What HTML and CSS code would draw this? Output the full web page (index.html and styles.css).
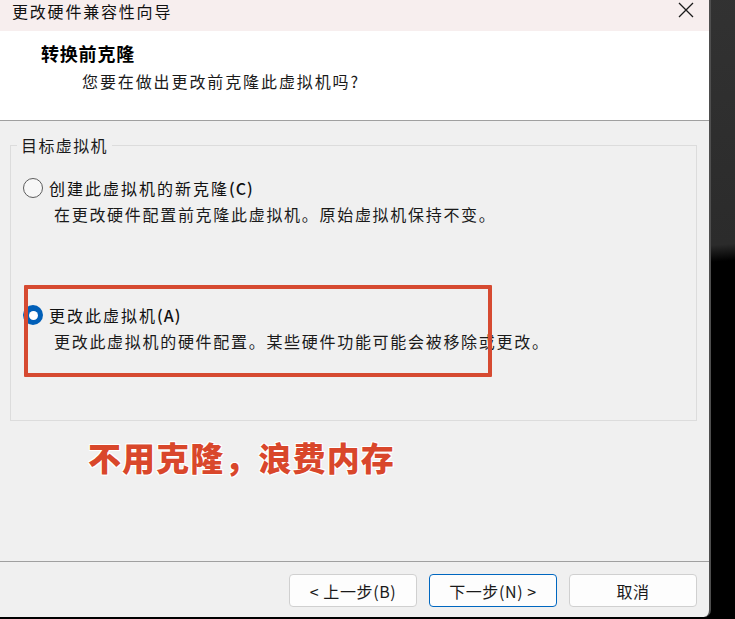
FILE: index.html
```html
<!DOCTYPE html>
<html lang="zh-CN">
<head>
<meta charset="utf-8">
<title>更改硬件兼容性向导</title>
<link rel="stylesheet" href="styles.css">
</head>
<body>
<div class="window">
  <div class="titlebar">
    <span class="title">更改硬件兼容性向导</span>
    <svg class="close" width="16" height="16" viewBox="0 0 16 16"><path d="M1 1 L15 15 M15 1 L1 15" stroke="#1b1b1b" stroke-width="1.3" fill="none"/></svg>
  </div>
  <div class="header">
    <div class="heading">转换前克隆</div>
    <div class="subtitle">您要在做出更改前克隆此虚拟机吗?</div>
  </div>
  <div class="body">
    <fieldset class="group">
      <legend>目标虚拟机</legend>
      <div class="option first">
        <div class="option-row"><span class="radio"></span><span class="label">创建此虚拟机的新克隆<span class="label-key">(C)</span></span></div>
        <div class="desc">在更改硬件配置前克隆此虚拟机。原始虚拟机保持不变。</div>
      </div>
      <div class="option second">
        <div class="option-row"><span class="radio checked"></span><span class="label">更改此虚拟机<span class="label-key">(A)</span></span></div>
        <div class="desc">更改此虚拟机的硬件配置。某些硬件功能可能会被移除或更改。</div>
      </div>
    </fieldset>
  </div>
  <div class="footer">
    <button class="btn">&lt; 上一步(B)</button>
    <button class="btn primary">下一步(N) &gt;</button>
    <button class="btn">取消</button>
  </div>
  <div class="mark-box"></div>
  <div class="mark-text">不用克隆，浪费内存</div>
</div>
</body>
</html>
```
FILE: styles.css
```css
* { box-sizing: border-box; }
html, body { margin: 0; height: 100%; }
body {
  background: linear-gradient(176deg, #333333 0, #2b2b2b 44%, #000000 46.5%, #000000 100%);
  font-family: "Noto Sans CJK SC", "Noto Sans", sans-serif;
  color: #1a1a1a;
  overflow: hidden;
}
.window {
  position: relative;
  width: 711px;
  height: 617px;
  background: #f0f0f0;
  border-right: 2px solid #4e4e4e;
  border-bottom-right-radius: 7px;
  display: flex;
  flex-direction: column;
  overflow: hidden;
}
.titlebar {
  height: 31px;
  flex: none;
  background: #f7eeee;
  display: flex;
  justify-content: space-between;
  align-items: flex-start;
  padding: 0 15px 0 12px;
}
.title {
  font-size: 16px;
  line-height: 22px;
  letter-spacing: 1.8px;
  color: #111;
}
.close { margin-top: 2px; }
.header {
  height: 90px;
  flex: none;
  background: #ffffff;
  border-bottom: 1px solid #a0a0a0;
  padding: 10px 0 0 41px;
}
.heading {
  font-size: 18px;
  line-height: 24px;
  font-weight: 700;
  letter-spacing: 0.8px;
  color: #000;
}
.subtitle {
  margin: 4px 0 0 41px;
  font-size: 16px;
  line-height: 24px;
  letter-spacing: 1.9px;
  color: #1a1a1a;
}
.body {
  flex: 1;
  padding: 14px 12px 0 10px;
}
.group {
  margin: 0;
  height: 286px;
  border: 1px solid #dcdcdc;
  padding: 0 0 0 12px;
}
.group legend {
  margin-left: -6px;
  padding: 0 4px;
  font-size: 16px;
  line-height: 20px;
  letter-spacing: 1.4px;
  color: #1a1a1a;
}
.option.first { margin-top: 22px; }
.option.second { margin-top: 79px; }
.option-row {
  display: flex;
  align-items: center;
  gap: 6px;
  height: 22px;
}
.radio {
  width: 20px;
  height: 20px;
  border-radius: 50%;
  border: 1px solid #5c5c5c;
  background: #f7f7f7;
  flex: none;
  display: flex;
  align-items: center;
  justify-content: center;
}
.radio.checked {
  border: none;
  background: #005fb8;
}
.radio.checked::after {
  content: "";
  width: 9px;
  height: 9px;
  border-radius: 50%;
  background: #ffffff;
}
.label {
  font-size: 16px;
  line-height: 22px;
  letter-spacing: 2px;
  color: #111;
}
.label-key { font-weight: 500; letter-spacing: 1px; }
.desc {
  margin: 4px 0 0 31px;
  font-size: 16px;
  line-height: 22px;
  letter-spacing: 1.7px;
  color: #1a1a1a;
}
.footer {
  flex: none;
  height: 56px;
  border-top: 1px solid #a0a0a0;
  display: flex;
  justify-content: flex-end;
  gap: 12px;
  padding: 12px 12px 0 0;
}
.btn {
  width: 128px;
  height: 33px;
  border: 1px solid #d0d0d0;
  border-radius: 4px;
  background: #fdfdfd;
  font-family: "Noto Sans CJK SC", "Noto Sans", sans-serif;
  font-size: 16px;
  color: #1a1a1a;
  padding: 0;
  letter-spacing: 0.6px;
}
.btn.primary { border-color: #0067c0; }
.mark-box {
  position: absolute;
  left: 24px;
  top: 285px;
  width: 468px;
  height: 92px;
  border: 4px solid #d64a31;
  border-radius: 1px;
}
.mark-text {
  position: absolute;
  left: 88px;
  top: 435px;
  font-size: 33px;
  line-height: 44px;
  font-weight: 900;
  letter-spacing: 1.1px;
  color: #d9472b;
  text-shadow: 0 0 2px #fff, 1px 1px 0 #fff, -1px -1px 0 #fff, 1px -1px 0 #fff, -1px 1px 0 #fff;
}
```
